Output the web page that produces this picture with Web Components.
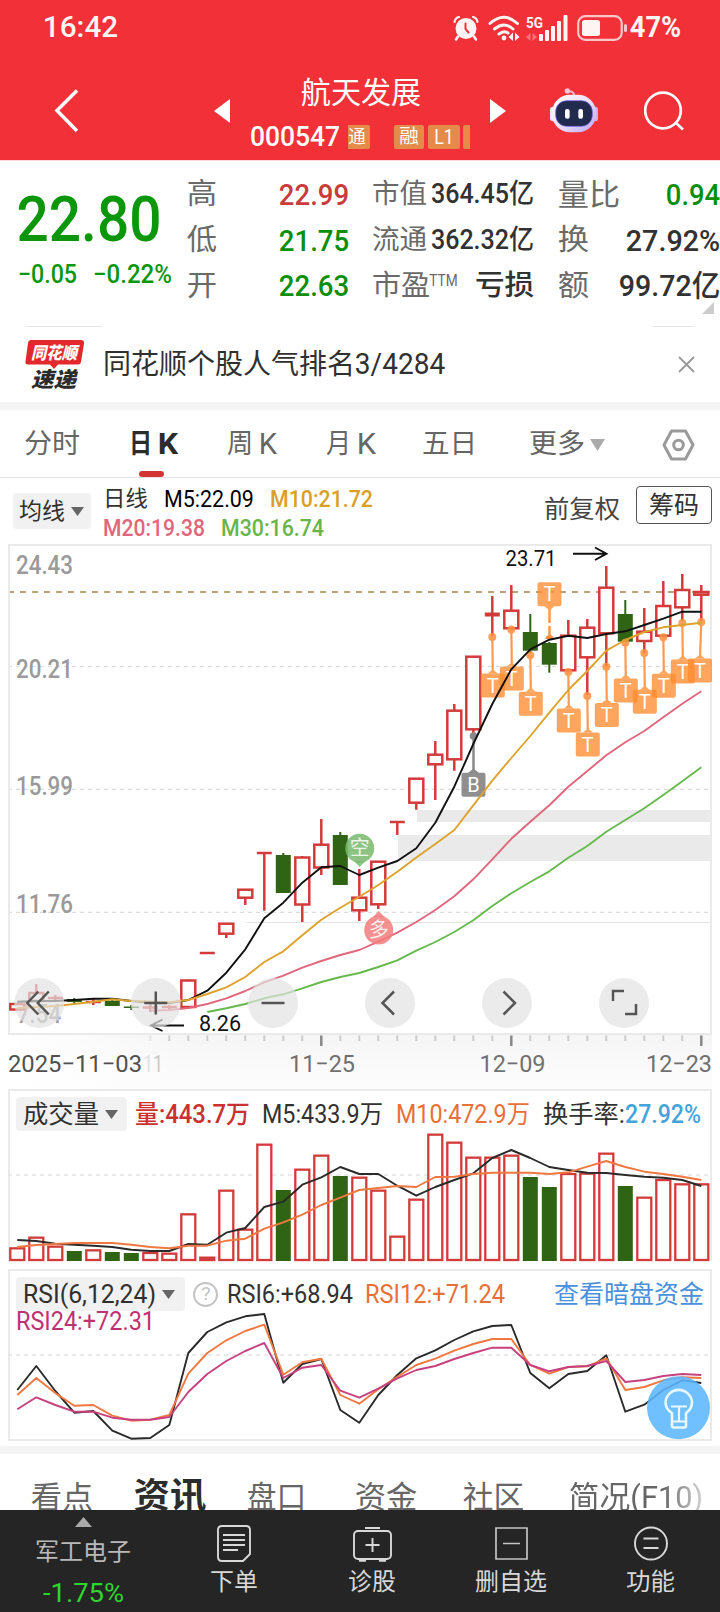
<!DOCTYPE html>
<html lang="zh-CN">
<head>
<meta charset="utf-8">
<title>航天发展 000547</title>
<style>
  html, body {
    margin: 0;
    padding: 0;
  }

  body {
    width: 720px;
    height: 1612px;
    overflow: hidden;
    background: #fff;
    color: #323232;
    font-family: Roboto, "Noto Sans CJK SC", sans-serif;
  }
</style>
</head>
<body>
<stock-app></stock-app>

<script>
// Text scaled horizontally so that its ink fills the "w" attribute
class FitText extends HTMLElement {
  constructor() {
    super();
    this.attachShadow({ mode: 'open' });
  }

  connectedCallback() {
    const size = Number(this.getAttribute('size'));
    const w = Number(this.getAttribute('w'));
    this.shadowRoot.innerHTML = `
      <style>
        :host {
          display: block;
          flex: none;
          width: ${w}px;
          height: ${size}px;
          font-size: ${size}px;
          line-height: 1;
          white-space: nowrap;
        }

        span {
          display: inline-block;
          transform-origin: 0 50%;
        }
      </style>
      <span><slot></slot></span>
    `;
    const span = this.shadowRoot.querySelector('span');
    const natural = span.getBoundingClientRect().width;
    const scale = (w + size * 0.08) / natural;
    span.style.transform = `translateX(${-size * 0.04}px) scaleX(${scale})`;
  }
}

customElements.define('fit-text', FitText);

class StatusBar extends HTMLElement {
  constructor() {
    super();
    this.attachShadow({ mode: 'open' });
  }

  connectedCallback() {
    this.shadowRoot.innerHTML = `
      <style>
        :host {
          display: flex;
          align-items: center;
          height: 55px;
          padding: 0 40px 0 44px;
          color: #fff4f4;
          font-weight: 500;
        }

        svg {
          display: block;
          flex: none;
          overflow: visible;
        }

        .icons {
          display: flex;
          align-items: center;
          margin-left: auto;
        }
      </style>
      <fit-text w="73" size="29">16:42</fit-text>
      <div class="icons">
        <svg width="26" height="26" viewBox="0 0 26 26" fill="none" stroke="#fff4f4" stroke-linecap="round">
          <circle cx="13" cy="13.5" r="10.5" fill="#fff4f4" stroke="none"/>
          <path d="M1.500 7A6 6 0 0 1 6 2M24.500 7A6 6 0 0 0 20 2" stroke-width="2.200"/>
          <path d="M5 21.500L3 24.500M21 21.500L23 24.500" stroke-width="2.600"/>
          <path d="M12.500 8.500V14L15.500 17.500" stroke="#f23038" stroke-width="2"/>
        </svg>
        <svg width="32" height="26" viewBox="0 0 32 26" fill="none" stroke="#fff4f4" stroke-linecap="round" style="margin-left:9px">
          <path d="M2 8.500Q16 -4 29.500 8.500" stroke-width="3"/>
          <path d="M6.500 14Q16 6 25 14" stroke-width="3"/>
          <path d="M11 19Q16 15 20 18" stroke-width="3"/>
          <circle cx="16" cy="23" r="2.400" fill="#fff4f4" stroke="none"/>
          <path d="M25 17.500V26L20.500 22ZM27 17.500V26L31.500 22Z" fill="#fff4f4" stroke="none"/>
        </svg>
        <svg width="42" height="26" viewBox="0 0 42 26" fill="#fff4f4" style="margin-left:6px">
          <text x="0" y="12.500" font-size="15.500" font-weight="700" textLength="17" lengthAdjust="spacingAndGlyphs">5G</text>
          <path d="M4.500 18V26L0 22ZM6.500 18V26L11 22Z" opacity=".35"/>
          <rect x="13" y="19" width="4" height="7" rx="1"/>
          <rect x="19" y="15" width="4" height="11" rx="1"/>
          <rect x="25" y="11" width="4" height="15" rx="1"/>
          <rect x="31" y="6" width="4" height="20" rx="1"/>
          <rect x="37.500" y="0" width="4" height="26" rx="1"/>
        </svg>
        <svg width="52" height="26" viewBox="0 0 52 26" fill="#fff4f4" style="margin-left:9px">
          <rect x="1.200" y="1.200" width="43.500" height="23.600" rx="7" fill="none" stroke="#fbc6c8" stroke-width="2.200"/>
          <rect x="5" y="5" width="18" height="16" rx="2.500"/>
          <rect x="47" y="9" width="3" height="8" rx="1.500" fill="#fbc6c8"/>
        </svg>
        <fit-text w="49" size="29" style="margin-left:2px;font-weight:700">47%</fit-text>
      </div>
    `;
  }
}

customElements.define('status-bar', StatusBar);

class StockHeader extends HTMLElement {
  constructor() {
    super();
    this.attachShadow({ mode: 'open' });
  }

  connectedCallback() {
    this.shadowRoot.innerHTML = `
      <style>
        :host {
          display: flex;
          align-items: center;
          box-sizing: border-box;
          height: 105px;
          padding: 7px 37px 0 52px;
          color: #fff;
        }

        svg {
          display: block;
          flex: none;
        }

        .title {
          display: flex;
          flex-direction: column;
          align-items: center;
          gap: 15px;
          width: 219px;
          margin: 6px 20px 0 21px;
        }

        .code {
          display: flex;
          align-items: center;
          width: 219px;
          font-weight: 500;
        }

        .tags {
          display: flex;
          width: 122px;
          margin-left: 9px;
          overflow: hidden;
          font-weight: 400;
        }

        .tag {
          display: flex;
          flex: none;
          align-items: center;
          justify-content: center;
          box-sizing: border-box;
          width: 30px;
          height: 24px;
          margin-right: 3.500px;
          border-radius: 2px;
          background: #e48b4a;
        }

        .tag.first {
          width: 22px;
          margin-right: 24px;
          padding-right: 5px;
          border-radius: 0 2px 2px 0;
        }
      </style>
      <svg width="28" height="44" viewBox="0 0 28 44" fill="none" stroke="#fff" stroke-width="3.500"><path d="M25 1.500L5 21.500L25 42"/></svg>
      <svg width="16" height="24" viewBox="0 0 16 24" style="margin-left:134px"><path d="M16 0V24L0 12Z" fill="#fff"/></svg>
      <div class="title">
        <fit-text w="118" size="30">航天发展</fit-text>
        <div class="code">
          <fit-text w="88" size="28">000547</fit-text>
          <div class="tags">
            <span class="tag first"><fit-text w="16" size="18">通</fit-text></span>
            <span class="tag"><fit-text w="18" size="19">融</fit-text></span>
            <span class="tag" style="width:32px"><fit-text w="18" size="20">L1</fit-text></span>
            <span class="tag"></span>
          </div>
        </div>
      </div>
      <svg width="16" height="24" viewBox="0 0 16 24"><path d="M0 0V24L16 12Z" fill="#fff"/></svg>
      <svg width="48" height="45" viewBox="330 248 144 135" style="margin:0 0 2px 44px">
        <defs>
          <linearGradient id="shell" x1="0" y1="0" x2="1" y2="1">
            <stop offset="0" stop-color="#fff"/>
            <stop offset=".55" stop-color="#eadcf8"/>
            <stop offset="1" stop-color="#b9a2f2"/>
          </linearGradient>
        </defs>
        <path d="M383 258Q402 256 403 272" fill="none" stroke="#fbb4c8" stroke-width="6"/>
        <circle cx="382" cy="257" r="8" fill="#fbc3d2"/>
        <rect x="330" y="304" width="18" height="44" rx="9" fill="#f3e6fb"/>
        <rect x="456" y="304" width="18" height="44" rx="9" fill="#c9b4f4"/>
        <rect x="336" y="268" width="132" height="113" rx="54" fill="url(#shell)"/>
        <rect x="347" y="286" width="110" height="77" rx="33" fill="#222a4e" stroke="#6f5be0" stroke-width="2"/>
        <rect x="375" y="311" width="14" height="29" rx="6" fill="#fff"/>
        <rect x="415" y="311" width="14" height="29" rx="6" fill="#fff"/>
      </svg>
      <svg width="40" height="40" viewBox="0 0 40 40" fill="none" stroke="#fff" stroke-width="2.700" style="margin-left:46px">
        <circle cx="19" cy="19.500" r="17.800"/>
        <path d="M31 31L39 38.500"/>
      </svg>
    `;
  }
}

customElements.define('stock-header', StockHeader);

class QuotePanel extends HTMLElement {
  constructor() {
    super();
    this.attachShadow({ mode: 'open' });
  }

  connectedCallback() {
    this.shadowRoot.innerHTML = `
      <style>
        :host {
          display: grid;
          grid-template-columns: 143px 160px 160px 160px;
          box-sizing: border-box;
          height: 166px;
          padding: 11px 0 0 19px;
          column-gap: 25.500px;
          border-top: 1px solid #fdd9da;
          font-weight: 500;
          position: relative;
        }

        .price {
          color: #0b960b;
          padding-top: 16px;
        }

        .change {
          display: flex;
          justify-content: space-between;
          width: 152px;
          margin-top: 10px;
        }

        .row {
          display: flex;
          align-items: center;
          justify-content: space-between;
          height: 45.700px;
        }

        .label {
          color: #6a6a6a;
          font-weight: 400;
        }

        .pair {
          display: flex;
          gap: 1px;
        }

        .up {
          color: #c93c3c;
        }

        .down {
          color: #0b8f0b;
        }

        .corner {
          position: absolute;
          right: 6px;
          top: 141px;
          border-left: 12px solid transparent;
          border-bottom: 12px solid #ccc;
        }
      </style>
      <div class="price">
        <fit-text w="140" size="63">22.80</fit-text>
        <div class="change">
          <fit-text w="57" size="26">−0.05</fit-text>
          <fit-text w="77" size="26">−0.22%</fit-text>
        </div>
      </div>
      <div>
        <div class="row"><fit-text class="label" w="28" size="29">高</fit-text><fit-text class="up" w="68" size="30">22.99</fit-text></div>
        <div class="row"><fit-text class="label" w="28" size="29">低</fit-text><fit-text class="down" w="68" size="30">21.75</fit-text></div>
        <div class="row"><fit-text class="label" w="28" size="29">开</fit-text><fit-text class="down" w="68" size="30">22.63</fit-text></div>
      </div>
      <div>
        <div class="row"><fit-text class="label" w="53" size="27">市值</fit-text><fit-text w="101" size="27">364.45亿</fit-text></div>
        <div class="row"><fit-text class="label" w="53" size="27">流通</fit-text><fit-text w="101" size="27">362.32亿</fit-text></div>
        <div class="row">
          <div class="pair"><fit-text class="label" w="56" size="28">市盈</fit-text><fit-text class="label" w="27" size="17">TTM</fit-text></div>
          <fit-text w="57" size="28">亏损</fit-text>
        </div>
      </div>
      <div>
        <div class="row"><fit-text class="label" w="60" size="30">量比</fit-text><fit-text class="down" w="52" size="30">0.94</fit-text></div>
        <div class="row"><fit-text class="label" w="29" size="29">换</fit-text><fit-text w="92" size="30">27.92%</fit-text></div>
        <div class="row"><fit-text class="label" w="29" size="29">额</fit-text><fit-text w="99" size="30">99.72亿</fit-text></div>
      </div>
      <i class="corner"></i>
    `;
  }
}

customElements.define('quote-panel', QuotePanel);

class NewsStrip extends HTMLElement {
  constructor() {
    super();
    this.attachShadow({ mode: 'open' });
  }

  connectedCallback() {
    this.shadowRoot.innerHTML = `
      <style>
        :host {
          display: block;
          height: 76px;
          border-bottom: 8px solid #f4f4f4;
        }

        .lines {
          display: flex;
          justify-content: space-between;
          height: 1px;
          margin: 0 25px;
        }

        .lines i {
          width: 77px;
          background: #e6e6e6;
        }

        .lines i + i {
          width: 42px;
        }

        .body {
          display: flex;
          align-items: center;
          height: 75px;
          padding: 0 25px;
          color: #303030;
        }

        .logo {
          display: block;
          margin-right: 19px;
          overflow: visible;
        }

        .close {
          display: block;
          margin-left: auto;
        }
      </style>
      <div class="lines"><i></i><i></i></div>
      <div class="body">
        <svg class="logo" width="60" height="50" viewBox="0 0 60 50">
          <path d="M6 0H56Q59.500 0 59 3.500L56 22Q55.500 24.500 53 24.500H33L29 29L25 24.500H3Q0 24.500 .500 21.500L3 3Q3.500 0 6 0Z" fill="#e3282d"/>
          <g font-weight="900" font-style="italic">
            <text x="6" y="18.500" font-size="17" fill="#fff" textLength="46" lengthAdjust="spacingAndGlyphs">同花顺</text>
            <text x="6" y="46.500" font-size="21" fill="#2b2b2b" textLength="45" lengthAdjust="spacingAndGlyphs">速递</text>
          </g>
        </svg>
        <fit-text w="250" size="28">同花顺个股人气排名</fit-text>
        <fit-text w="88" size="29" style="margin-left:2px">3/4284</fit-text>
        <svg class="close" width="17" height="17" viewBox="0 0 17 17" stroke="#999" stroke-width="1.800"><path d="M1 1L16 16M16 1L1 16"/></svg>
      </div>
    `;
  }
}

customElements.define('news-strip', NewsStrip);

class PeriodTabs extends HTMLElement {
  constructor() {
    super();
    this.attachShadow({ mode: 'open' });
  }

  connectedCallback() {
    this.shadowRoot.innerHTML = `
      <style>
        :host {
          display: flex;
          align-items: center;
          box-sizing: border-box;
          height: 68px;
          padding: 2px 25px 0;
          border-bottom: 1px solid #e4e4e4;
          color: #666;
        }

        .tab {
          display: flex;
          position: relative;
          align-items: center;
          gap: 8px;
          margin-right: 51px;
        }

        .active {
          color: #2c2c2c;
          font-weight: 700;
        }

        .active::after {
          content: "";
          position: absolute;
          left: 9px;
          top: 41px;
          width: 25px;
          height: 6px;
          border-radius: 3px;
          background: #d33434;
        }

        svg {
          display: block;
        }
      </style>
      <div class="tab"><fit-text w="54" size="27">分时</fit-text></div>
      <div class="tab active"><fit-text w="21" size="27">日</fit-text><fit-text w="18" size="29">K</fit-text></div>
      <div class="tab"><fit-text w="24" size="27">周</fit-text><fit-text w="16" size="29">K</fit-text></div>
      <div class="tab" style="margin-right:48px"><fit-text w="23" size="27">月</fit-text><fit-text w="17" size="29">K</fit-text></div>
      <div class="tab" style="margin-right:54px"><fit-text w="53" size="27">五日</fit-text></div>
      <div class="tab" style="gap:6px;margin-right:auto">
        <fit-text w="54" size="27">更多</fit-text>
        <svg width="15" height="12" viewBox="0 0 15 12"><path d="M0 0H15L7.500 12Z" fill="#aaa"/></svg>
      </div>
      <svg width="33" height="32" viewBox="0 0 33 32" fill="none" stroke="#9a9a9a" stroke-width="3" stroke-linejoin="round">
        <path d="M9.500 2H23.500L31 16L23.500 30H9.500L2 16Z"/>
        <circle cx="16.500" cy="16" r="4.800"/>
      </svg>
    `;
  }
}

customElements.define('period-tabs', PeriodTabs);

// Grey drop-down chip in front of an indicator's legend
class SelectChip extends HTMLElement {
  constructor() {
    super();
    this.attachShadow({ mode: 'open' });
  }

  connectedCallback() {
    this.shadowRoot.innerHTML = `
      <style>
        :host {
          display: flex;
          flex: none;
          align-items: center;
          gap: 7px;
          box-sizing: border-box;
          height: 34px;
          padding-left: 8px;
          border-radius: 4px;
          background: #f1f1f1;
          color: #303030;
        }
      </style>
      <slot></slot>
      <svg width="13" height="9" viewBox="0 0 13 9"><path d="M0 0H13L6.500 9Z" fill="#666"/></svg>
    `;
  }
}

customElements.define('select-chip', SelectChip);

class AverageLegend extends HTMLElement {
  constructor() {
    super();
    this.attachShadow({ mode: 'open' });
  }

  connectedCallback() {
    this.shadowRoot.innerHTML = `
      <style>
        :host {
          display: flex;
          align-items: flex-start;
          height: 62px;
          padding: 0 8px 0 13px;
        }

        select-chip {
          width: 78px;
          height: 36px;
          margin-top: 15px;
          padding-left: 7px;
        }

        .values {
          margin: 10px auto 0 13px;
          font-weight: 500;
        }

        .line {
          display: flex;
          gap: 18px;
          margin-bottom: 6px;
        }

        .adjust {
          margin: 19px 17px 0 0;
          color: #444;
        }

        .chips {
          display: flex;
          align-items: center;
          justify-content: center;
          box-sizing: border-box;
          width: 76px;
          height: 38px;
          margin-top: 8px;
          border: 1.500px solid #555;
          border-radius: 4px;
        }
      </style>
      <select-chip><fit-text w="44" size="23">均线</fit-text></select-chip>
      <div class="values">
        <div class="line">
          <fit-text w="43" size="22" style="font-weight:400">日线</fit-text>
          <fit-text w="88" size="23" style="color:#000;font-weight:400">M5:22.09</fit-text>
          <fit-text w="101" size="23" style="color:#d99f26">M10:21.72</fit-text>
        </div>
        <div class="line">
          <fit-text w="100" size="23" style="color:#e0677a">M20:19.38</fit-text>
          <fit-text w="101" size="23" style="color:#68b54c">M30:16.74</fit-text>
        </div>
      </div>
      <fit-text class="adjust" w="74" size="25">前复权</fit-text>
      <div class="chips"><fit-text w="48" size="25">筹码</fit-text></div>
    `;
  }
}

customElements.define('average-legend', AverageLegend);

const UP = '#d33b3b';
const DOWN = '#2f6414';
const STEP = 19;
const cx = i => 17.3 + STEP * i;

function polyline(values, color, start = 0, y = v => v) {
  const points = values.map((v, n) => `${cx(start + n).toFixed(1)},${y(v).toFixed(1)}`).join(' ');
  return `<polyline points="${points}" fill="none" stroke="${color}" stroke-width="1.900" stroke-linejoin="round"/>`;
}

function label(x, y, w, size, color, text, extra = '') {
  return `<text x="${x}" y="${y}" font-size="${size}" fill="${color}" textLength="${w}" lengthAdjust="spacingAndGlyphs" ${extra}>${text}</text>`;
}

// [high, low, body top, body bottom, falling]
const CANDLES = [
  [1003, 1010, 1004, 1009.500], [984, 1002, 993, 1001], [995, 1000.500, 998, 998], [998, 1003, 999, 1002, 1],
  [999, 1005, 1002, 1002], [1000, 1006, 1000.700, 1006, 1], [1005, 1010, 1006.500, 1008, 1], [1004, 1012, 1007.500, 1007.500],
  [1005, 1010, 1007, 1008], [979.500, 1008, 980.500, 1007], [953, 953, 953, 953], [923, 938, 923.700, 933.700],
  [889, 905, 889.700, 897.700], [853, 910.700, 853, 853], [853, 893, 855, 893, 1], [856, 922, 857.500, 904.500],
  [819, 875, 844.700, 867.500], [832, 885, 835, 885, 1], [869, 921, 897.700, 910.300], [861, 909, 861.700, 904.300],
  [822, 835, 822, 822], [778, 809.700, 778.700, 802.700], [741, 800, 754.700, 764.300], [704, 770.700, 710.700, 759.300],
  [656, 736, 656.700, 729.300], [596, 636, 614.500, 616], [585, 629, 610.700, 628.300], [614, 653, 632, 650.700, 1],
  [642, 672.700, 643, 664.700, 1], [620, 671, 635.700, 670.300], [619, 695, 627.700, 657.300], [566, 666.700, 587.700, 633.300],
  [600, 642, 614, 641.700, 1], [608, 653, 631.700, 641], [581, 636, 606, 635.700], [574, 621, 590, 607.300],
  [585, 621, 592, 594.700]
];

const MA5 = [1001.7, 1001, 1001, 1000, 998.7, 998.7, 1001, 1002.7, 1003, 1000, 990.7, 972.7, 949.3, 918.3, 902.7, 882.7, 867.3, 866, 875, 867.7, 861, 848.3, 822.7, 786.7, 744, 704, 669.3, 649.3, 639.7, 635.7, 638, 634, 631.3, 625, 618.7, 611.7, 611.7];
const MA10 = [1008, 1007, 1006, 1004, 1001.7, 999.3, 1001, 1001.5, 1002.3, 1000, 994, 987.3, 977, 962, 951.3, 935.3, 919.7, 907.7, 896.7, 885, 871.7, 857.5, 844, 830, 805.3, 780.7, 758, 736, 712.7, 690, 671, 650.7, 640, 632, 627.3, 625, 622.7];
const MA20 = [1010.7, 1010, 1008, 1004, 998.3, 991, 982.3, 975.7, 967.7, 961, 955, 950, 941.7, 932.7, 922, 910, 896.3, 879.3, 859.3, 838.8, 821.7, 805.3, 786.7, 771, 755.3, 742.3, 731, 717.3, 703.7, 691.3];
const MA30 = [1012, 1008.3, 1004, 998.3, 994.3, 988.3, 982, 977, 973, 967, 960.3, 950.7, 942, 932, 920.3, 906, 893.3, 882, 871.3, 857.7, 846, 831.7, 820, 808.3, 795, 781.3, 767.3];

// [candle index, dot y, box centre y]
const TRADES = [
  [25, 637, 685.5], [26, 629.5, 678.5], [27, 655.3, 703.7], [29, 672, 720.5], [30, 696, 744.5], [31, 666.7, 715],
  [32, 642.7, 690.5], [33, 653, 701.8], [34, 637.3, 685.8], [35, 623, 671.5], [36, 622, 670.5]
];

class KLineChart extends HTMLElement {
  constructor() {
    super();
    this.attachShadow({ mode: 'open' });
  }

  candle([high, low, top, bottom, falling], i) {
    const x = cx(i);
    if (falling) {
      return `<path d="M${x} ${high}V${low}" stroke="${DOWN}" stroke-width="2"/>
        <rect x="${x - 7.5}" y="${top}" width="15" height="${bottom - top}" fill="${DOWN}"/>`;
    }
    if (bottom - top < 2) {
      const bar = i === 25 ? 4 : 2.5;
      return `<path d="M${x} ${high}V${low}" stroke="${UP}" stroke-width="2.500"/>
        <path d="M${x - 7.5} ${top}H${x + 7.5}" stroke="${UP}" stroke-width="${bar}"/>`;
    }
    return `<path d="M${x} ${high}V${top}M${x} ${bottom}V${low}" stroke="${UP}" stroke-width="2.500"/>
      <rect x="${x - 7}" y="${top}" width="14" height="${bottom - top}" fill="#fff" stroke="${UP}" stroke-width="2.500"/>`;
  }

  marker(x, y, letter, color) {
    return `<rect x="${x - 12}" y="${y - 12}" width="24" height="24" rx="2" fill="${color}"/>
      <text x="${x}" y="${y + 7}" font-size="20" fill="#fff" text-anchor="middle">${letter}</text>`;
  }

  trade([i, dot, y]) {
    const x = cx(i);
    const bx = i === 36 ? 700 : x + 0.5;
    return `<circle cx="${x}" cy="${dot}" r="4" fill="#ff9040" opacity=".85"/>
      <path d="M${x} ${dot}L${bx} ${y - 13}" stroke="#ff9a50" stroke-width="2.200"/>
      <path d="M${bx - 5} ${y - 12}L${bx} ${y - 16}L${bx + 5} ${y - 12}Z" fill="#ffa45c"/>
      ${this.marker(bx, y, 'T', 'rgba(255,140,48,.78)')}`;
  }

  connectedCallback() {
    const grid = [666.5, 789.3, 912.3].map(y => `<path d="M8 ${y}H710" stroke="#dcdcdc" stroke-width="1.200" stroke-dasharray="4 4"/>`).join('');
    let ticks = '';
    for (let i = 7; i < 37; i++) {
      const major = i % 10 === 6;
      ticks += `<path d="M${cx(i)} 1035.500V${major ? 1046 : 1041}" stroke="${major ? '#888' : '#ccc'}" stroke-width="${major ? 2.5 : 2}" opacity="${i === 7 ? 0.4 : 1}"/>`;
    }
    const buttons = [
      [39.3, 'M-1 -11.500L-12 0L-1 11.500M9.500 -11.500L-1.500 0L9.500 11.500'],
      [155.8, 'M-11.500 0H11.500M0 -11.500V11.500'],
      [273, 'M-11.500 0H11.500'],
      [390, 'M4 -11.500L-7.500 0L4 11.500'],
      [507, 'M-3.500 -11.500L8 0L-3.500 11.500'],
      [624, 'M-11 -2V-12H0M12 1V11H1']
    ].map(([x, d]) => `<g transform="translate(${x} 1003)">
        <circle r="25" fill="#e2e2e2" fill-opacity=".7"/>
        <path d="${d}" fill="none" stroke="#555" stroke-width="2.500"/>
      </g>`).join('');

    this.shadowRoot.innerHTML = `
      <style>
        :host {
          display: block;
          height: 549px;
        }

        svg {
          display: block;
        }
      </style>
      <svg width="720" height="549" viewBox="0 540 720 549">
        <defs>
          <linearGradient id="axis" x1="0" y1="0" x2="0" y2="1">
            <stop offset="0" stop-color="#f5f5f5"/>
            <stop offset=".6" stop-color="#fafafa"/>
            <stop offset="1" stop-color="#fcfcfc"/>
          </linearGradient>
          <linearGradient id="left">
            <stop offset="0" stop-color="#fff"/>
            <stop offset="1" stop-color="#fff" stop-opacity="0"/>
          </linearGradient>
          <linearGradient id="fade">
            <stop offset="0" stop-color="#eee"/>
            <stop offset="1" stop-color="#bbb"/>
          </linearGradient>
        </defs>
        <rect x="9" y="1035" width="703" height="54" fill="url(#axis)"/>
        <rect x="9" y="1035" width="180" height="54" fill="url(#left)"/>
        <path d="M417 810H712V822H417ZM398 835H712V861H398Z" fill="#eaeaea"/>
        <path d="M246 922.500H712" stroke="#e2e2e2"/>
        ${grid}
        <path d="M8 592H710" stroke="#b9a37c" stroke-width="1.800" stroke-dasharray="6 6"/>
        <path d="M9 1034V545H711V1034Z" fill="none" stroke="#eaeaea" stroke-width="2"/>
        <g font-weight="500">
          ${label(16, 573.5, 57, 25, '#9a9a9a', '24.43')}
          ${label(16, 678, 57, 25, '#9a9a9a', '20.21')}
          ${label(16, 795, 57, 25, '#9a9a9a', '15.99')}
          ${label(16, 912.5, 57, 25, '#9a9a9a', '11.76')}
          ${label(17, 1023, 44, 25, '#9a9a9a', '7.54')}
        </g>
        ${CANDLES.map((c, i) => this.candle(c, i)).join('')}
        <path d="M473.500 736V772" stroke="#888" stroke-width="2.500"/>
        <circle cx="473.500" cy="736" r="3.800" fill="#888"/>
        <path d="M468 773L473.500 768.500L479 773Z" fill="#8c8c8c"/>
        ${this.marker(473.5, 784.7, 'B', 'rgba(128,128,128,.88)')}
        ${TRADES.map(t => this.trade(t)).join('')}
        <path d="M549.500 606V640" stroke="#ff9a50" stroke-width="2.500" stroke-dasharray="17 3"/>
        <path d="M545.500 639A4 4 0 0 1 553.500 639Z" fill="#ff9040"/>
        <path d="M544.500 606.300L549.500 610.500L554.500 606.300Z" fill="#ffa45c"/>
        ${this.marker(549.5, 594.3, 'T', 'rgba(255,140,48,.78)')}
        ${polyline(MA5, '#111')}
        ${polyline(MA10, '#dda22e')}
        ${polyline(MA20, '#e0677c', 7)}
        ${polyline(MA30, '#66b94c', 10)}
        <g fill-opacity=".85" font-size="20" text-anchor="middle">
          <path d="M354 861L359.700 867L365.500 861Z" fill="#7cba70"/>
          <circle cx="359.700" cy="848.300" r="14.500" fill="#78b86c"/>
          <text x="359.700" y="855" fill="#fff">空</text>
          <path d="M373 917L378.700 911L384.500 917Z" fill="#f28080"/>
          <circle cx="378.700" cy="930" r="14.500" fill="#f27d7d"/>
          <text x="378.700" y="937" fill="#fff">多</text>
        </g>
        ${label(505.5, 566, 51, 22, '#111', '23.71')}
        <path d="M573 553.700H606M595 547.500L606.500 553.700L595 560" fill="none" stroke="#111" stroke-width="1.900"/>
        ${label(199, 1031, 42, 22, '#111', '8.26')}
        <path d="M184 1025.500H151M162.500 1019.500L151 1025.500L162.500 1031" fill="none" stroke="#111" stroke-width="1.900"/>
        ${ticks}
        ${label(143, 1072, 20, 24, 'url(#fade)', '11')}
        ${label(8, 1072, 134, 24, '#505050', '2025−11−03')}
        ${label(289, 1072, 66, 24, '#707070', '11−25')}
        ${label(479.5, 1072, 66, 24, '#707070', '12−09')}
        ${label(646, 1072, 66, 24, '#707070', '12−23')}
        ${buttons}
      </svg>
    `;
  }
}

customElements.define('kline-chart', KLineChart);

// Bar tops in thirds of a pixel below y = 1085
const VOLUMES = [487, 455, 482, 498, 493, 501, 504, 501, 503, 385, 515, 314, 431, 176, 315, 251, 209, 273, 275, 314, 452, 341, 146, 170, 215, 215, 209, 276, 306, 264, 263, 203, 303, 335, 282, 295, 295];
const FALLING = [3, 5, 6, 14, 17, 27, 28, 32];
const VOL5 = [465, 468, 476, 479, 482, 486, 494, 498, 498, 477, 479, 443, 429, 366, 350, 299, 277, 246, 267, 267, 302, 332, 306, 285, 265, 219, 195, 219, 246, 255, 263, 264, 270, 275, 278, 285, 303];
const VOL10 = [486, 480, 477, 474, 474, 474, 479, 486, 490, 482, 482, 467, 461, 431, 412, 389, 360, 338, 315, 309, 303, 306, 276, 275, 267, 263, 263, 263, 267, 262, 245, 228, 246, 260, 267, 275, 285];

class VolumeChart extends HTMLElement {
  constructor() {
    super();
    this.attachShadow({ mode: 'open' });
  }

  connectedCallback() {
    const y = v => 1085 + v / 3;
    const bars = VOLUMES.map((v, i) => {
      const top = y(v);
      if (FALLING.includes(i)) {
        return `<rect x="${cx(i) - 7.5}" y="${top}" width="15" height="${1261 - top}" fill="${DOWN}"/>`;
      }
      return `<rect x="${cx(i) - 7}" y="${top + 1}" width="14" height="${1260 - top - 1}" fill="${i === 10 ? '#f04848' : '#fff'}" stroke="${UP}" stroke-width="2.300"/>`;
    }).join('');
    this.shadowRoot.innerHTML = `
      <style>
        :host {
          display: grid;
          height: 176px;
        }

        svg, .legend {
          grid-area: 1 / 1;
        }

        svg {
          display: block;
        }

        .legend {
          display: flex;
          align-items: center;
          align-self: start;
          height: 34px;
          padding: 8px 0 0 16px;
        }

        select-chip {
          width: 111px;
          margin-right: 9px;
        }
      </style>
      <svg width="720" height="176" viewBox="0 1089 720 176">
        <path d="M9 1261V1090H711V1261" fill="none" stroke="#eaeaea" stroke-width="2"/>
        <path d="M8 1175H710" stroke="#e4e4e4" stroke-width="1.500" stroke-dasharray="4 4"/>
        ${bars}
        ${polyline(VOL5, '#2a2a2a', 0, y)}
        ${polyline(VOL10, '#f07840', 0, y)}
      </svg>
      <div class="legend">
        <select-chip><fit-text w="74" size="25">成交量</fit-text></select-chip>
        <fit-text w="113" size="25" style="color:#cc2f2f;font-weight:500">量:443.7万</fit-text>
        <fit-text w="119" size="25" style="margin-left:14px">M5:433.9万</fit-text>
        <fit-text w="132" size="25" style="margin-left:15px;color:#e86f38">M10:472.9万</fit-text>
        <fit-text w="80" size="25" style="margin-left:15px">换手率:</fit-text>
        <fit-text w="74" size="25" style="margin-left:2px;color:#45a3dc;font-weight:500">27.92%</fit-text>
      </div>
    `;
  }
}

customElements.define('volume-chart', VolumeChart);

const RSI6 = [375, 303, 378, 443, 438, 497, 521, 519, 480, 264, 201, 172, 154, 147, 353, 297, 282, 435, 473, 390, 330, 280, 256, 225, 199, 183, 180, 324, 370, 327, 318, 271, 440, 419, 375, 346, 354];
const RSI12 = [390, 339, 384, 422, 420, 452, 467, 464, 450, 326, 264, 226, 198, 179, 329, 292, 281, 390, 416, 373, 335, 300, 281, 257, 237, 222, 222, 300, 326, 306, 304, 280, 375, 366, 346, 337, 339];
const RSI24 = [433, 397, 420, 440, 440, 458, 464, 464, 456, 381, 327, 288, 258, 234, 339, 308, 300, 377, 398, 371, 340, 315, 303, 282, 264, 248, 248, 300, 319, 306, 303, 288, 351, 345, 333, 327, 330];

class RsiChart extends HTMLElement {
  constructor() {
    super();
    this.attachShadow({ mode: 'open' });
  }

  connectedCallback() {
    const y = v => 1265 + v / 3;
    this.shadowRoot.innerHTML = `
      <style>
        :host {
          display: grid;
          height: 181px;
          border-bottom: 8px solid #f4f4f4;
        }

        .chart, .legend {
          grid-area: 1 / 1;
        }

        svg {
          display: block;
        }

        .legend {
          align-self: start;
          padding: 12px 17px 0 16px;
        }

        .row {
          display: flex;
          align-items: center;
        }

        select-chip {
          width: 169px;
        }

        .help {
          display: flex;
          align-items: center;
          justify-content: center;
          box-sizing: border-box;
          width: 25px;
          height: 25px;
          margin: 0 10px 0 8px;
          border: 2px solid #c4c4c4;
          border-radius: 50%;
          color: #c4c4c4;
        }

        .link {
          margin-left: auto;
          color: #4a90dc;
        }
      </style>
      <svg class="chart" width="720" height="181" viewBox="0 1265 720 181">
        <rect x="9" y="1270" width="702" height="170" fill="none" stroke="#eaeaea" stroke-width="2"/>
        <path d="M8 1355H710" stroke="#e4e4e4" stroke-width="1.500" stroke-dasharray="4 4"/>
        ${polyline(RSI6, '#2a2a2a', 0, y)}
        ${polyline(RSI12, '#f07840', 0, y)}
        ${polyline(RSI24, '#c8417f', 0, y)}
        <circle cx="678.500" cy="1407.700" r="31.500" fill="#5cb7ff" fill-opacity=".88"/>
        <g fill="none" stroke="#e9f7ff" stroke-width="2.600" stroke-linejoin="round">
          <path d="M672 1418V1413Q665.500 1409 665.500 1402A13.300 13.300 0 0 1 692 1402Q692 1409 686 1413V1426Q686 1427.500 684 1427.500H674Q672 1427.500 672 1426Z"/>
          <path d="M671 1406.500H687M679 1406.500V1421M672 1421.500H686" stroke-width="2.200"/>
        </g>
      </svg>
      <div class="legend">
        <div class="row">
          <select-chip><fit-text w="131" size="25">RSI(6,12,24)</fit-text></select-chip>
          <span class="help"><fit-text w="8" size="18">?</fit-text></span>
          <fit-text w="124" size="25">RSI6:+68.94</fit-text>
          <fit-text w="138" size="25" style="margin-left:14px;color:#e86f38">RSI12:+71.24</fit-text>
          <fit-text class="link" w="148" size="25">查看暗盘资金</fit-text>
        </div>
        <fit-text w="137" size="25" style="margin:-2px 0 0 1px;color:#bd3273">RSI24:+72.31</fit-text>
      </div>
    `;
  }
}

customElements.define('rsi-chart', RsiChart);

class InfoTabs extends HTMLElement {
  constructor() {
    super();
    this.attachShadow({ mode: 'open' });
  }

  connectedCallback() {
    this.shadowRoot.innerHTML = `
      <style>
        :host {
          display: flex;
          box-sizing: border-box;
          height: 56px;
          padding: 28px 0 0 32px;
          overflow: hidden;
          color: #666;
        }

        fit-text {
          margin-right: 48px;
        }

        .active {
          margin: -3px 43px 0 -5px;
          color: #2c2c2c;
          font-weight: 700;
        }

        .last {
          margin-right: 0;
          -webkit-mask-image: linear-gradient(to right, #000 70%, rgba(0, 0, 0, .3));
          mask-image: linear-gradient(to right, #000 70%, rgba(0, 0, 0, .3));
        }
      </style>
      <fit-text w="60" size="31">看点</fit-text>
      <fit-text class="active" w="70" size="35">资讯</fit-text>
      <fit-text w="57" size="31" style="margin-right:51px">盘口</fit-text>
      <fit-text w="60" size="31">资金</fit-text>
      <fit-text w="59" size="31" style="margin-right:47px">社区</fit-text>
      <fit-text class="last" w="132" size="31">简况(F10)</fit-text>
    `;
  }
}

customElements.define('info-tabs', InfoTabs);

class ActionBar extends HTMLElement {
  constructor() {
    super();
    this.attachShadow({ mode: 'open' });
  }

  connectedCallback() {
    this.shadowRoot.innerHTML = `
      <style>
        :host {
          display: flex;
          box-sizing: border-box;
          height: 102px;
          padding-left: 36px;
          background: #252525;
          color: #d8d8d8;
        }

        svg {
          display: block;
        }

        .item {
          display: flex;
          flex-direction: column;
          align-items: center;
          gap: 8px;
          margin-right: 81px;
          padding-top: 15px;
        }

        .sector {
          gap: 0;
          padding-top: 7px;
          color: #b9b9b9;
        }
      </style>
      <div class="item sector">
        <svg width="17" height="10" viewBox="0 0 17 10"><path d="M0 10L8.500 0L17 10Z" fill="#aaa"/></svg>
        <fit-text w="94" size="24" style="margin-top:13px">军工电子</fit-text>
        <fit-text w="79" size="25" style="margin-top:17px;color:#2fd62f">-1.75%</fit-text>
      </div>
      <div class="item" style="margin-right:92px">
        <svg width="34" height="37" viewBox="0 0 34 37" fill="none" stroke="#d8d8d8" stroke-width="1.900">
          <path d="M5 1H29Q33 1 33 5V29L26 36H5Q1 36 1 32V5Q1 1 5 1Z"/>
          <path d="M6 10H28M6 15H28M6 20H28M6 25H21"/>
        </svg>
        <fit-text w="46" size="24">下单</fit-text>
      </div>
      <div class="item">
        <svg width="39" height="37" viewBox="0 0 39 37" fill="none" stroke="#d8d8d8" stroke-width="1.900">
          <rect x="1" y="6" width="37" height="28" rx="4"/>
          <path d="M12 3H27M19.500 13V27M12.500 20H26.500"/>
          <path d="M6 35.500H13M26 35.500H33" stroke-width="2.500"/>
        </svg>
        <fit-text w="46" size="24">诊股</fit-text>
      </div>
      <div class="item">
        <svg width="33" height="37" viewBox="0 0 33 37" fill="none" stroke="#c4c4c4" stroke-width="1.700">
          <path d="M1 3H32V34H1ZM8 18.500H25"/>
        </svg>
        <fit-text w="70" size="24">删自选</fit-text>
      </div>
      <div class="item">
        <svg width="34" height="37" viewBox="0 0 34 37" fill="none" stroke="#d8d8d8" stroke-width="1.900">
          <circle cx="17" cy="18.500" r="16"/>
          <path d="M9.500 13.500H24.500M9.500 23H24.500"/>
        </svg>
        <fit-text w="47" size="24">功能</fit-text>
      </div>
    `;
  }
}

customElements.define('action-bar', ActionBar);

class StockApp extends HTMLElement {
  constructor() {
    super();
    this.attachShadow({ mode: 'open' });
  }

  connectedCallback() {
    this.shadowRoot.innerHTML = `
      <style>
        :host {
          display: block;
          width: 720px;
          height: 1612px;
          overflow: hidden;
        }

        .top {
          background: #f23038;
        }
      </style>
      <div class="top">
        <status-bar></status-bar>
        <stock-header></stock-header>
      </div>
      <quote-panel></quote-panel>
      <news-strip></news-strip>
      <period-tabs></period-tabs>
      <average-legend></average-legend>
      <kline-chart></kline-chart>
      <volume-chart></volume-chart>
      <rsi-chart></rsi-chart>
      <info-tabs></info-tabs>
      <action-bar></action-bar>
    `;
  }
}

customElements.define('stock-app', StockApp);
</script>
</body>
</html>
